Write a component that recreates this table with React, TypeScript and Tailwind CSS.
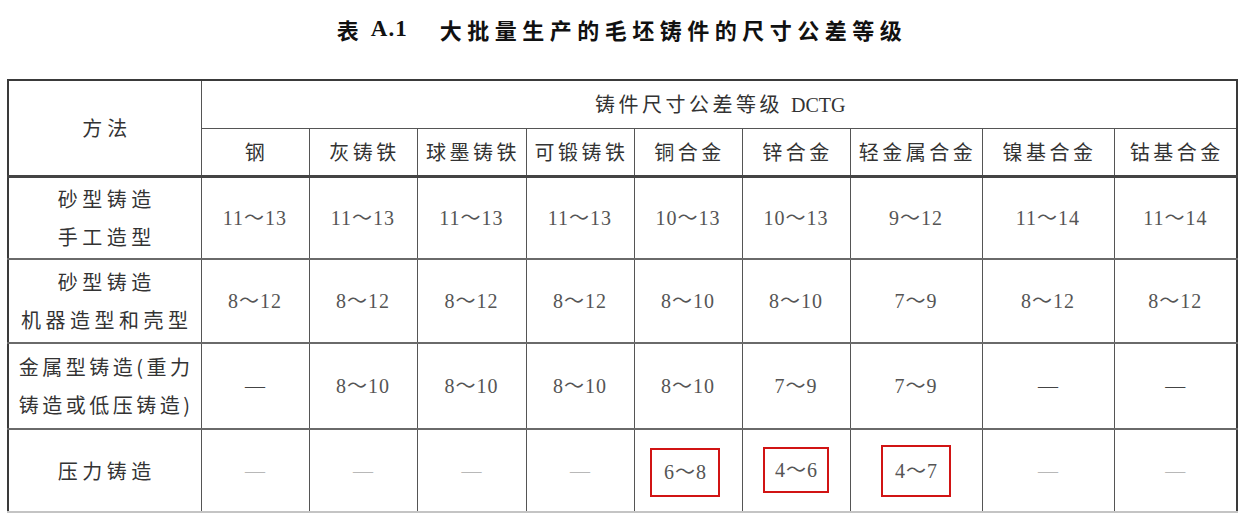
import React from "react";

const cjk = "font-['Noto_Sans_CJK_SC',sans-serif]";
const serif = "font-['Liberation_Serif','Noto_Sans_CJK_SC',serif]";

const materials = ["钢", "灰铸铁", "球墨铸铁", "可锻铸铁", "铜合金", "锌合金", "轻金属合金", "镍基合金", "钴基合金"];

type Row = { label: string[]; h: string; values: string[]; light?: boolean };

const rows: Row[] = [
  { label: ["砂型铸造", "手工造型"], h: "h-[83px]", values: ["11～13", "11～13", "11～13", "11～13", "10～13", "10～13", "9～12", "11～14", "11～14"] },
  { label: ["砂型铸造", "机器造型和壳型"], h: "h-[84px]", values: ["8～12", "8～12", "8～12", "8～12", "8～10", "8～10", "7～9", "8～12", "8～12"] },
  { label: ["金属型铸造(重力", "铸造或低压铸造)"], h: "h-[86px]", values: ["—", "8～10", "8～10", "8～10", "8～10", "7～9", "7～9", "—", "—"] },
  { label: ["压力铸造"], h: "h-[83px]", values: ["—", "—", "—", "—", "6～8", "4～6", "4～7", "—", "—"], light: true },
];

const boxes: Record<string, string> = {
  "6～8": "w-[70px] h-[49px] mt-[3px] -ml-[6px]",
  "4～6": "w-[66px] h-[46px] -mt-[2px]",
  "4～7": "w-[70px] h-[52px] mt-[1px]",
};

export default function App() {
  return (
    <div className={`w-[1244px] h-[526px] bg-white ${cjk}`}>
      <div className="h-[58px] flex items-center justify-center text-[22px] font-bold text-[#111]">
        <span>表</span>
        <span className={`ml-[12px] ${serif} text-[23px] tracking-[1px]`}>A.1</span>
        <span className="ml-[32px] tracking-[5.5px]">大批量生产的毛坯铸件的尺寸公差等级</span>
      </div>
      <table className="ml-[7px] mt-[21px] w-[1229px] table-fixed border-collapse border-x-2 border-t-2 border-b-2 border-x-[#3a3a3a] border-t-[#3a3a3a] border-b-[#c4c4c4] text-[#333] whitespace-nowrap">
        <colgroup>
          <col className="w-[193px]" />
          <col className="w-[108px]" />
          <col className="w-[108px]" />
          <col className="w-[109px]" />
          <col className="w-[108px]" />
          <col className="w-[108px]" />
          <col className="w-[108px]" />
          <col className="w-[132px]" />
          <col className="w-[132px]" />
          <col className="w-[123px]" />
        </colgroup>
        <thead>
          <tr className="h-[48px]">
            <th rowSpan={2} className="border-r border-r-[#555] border-b-[3px] border-b-[#444] p-0 text-[20px] font-normal tracking-[5px] pl-[5px]">
              方法
            </th>
            <th colSpan={9} className="border-b border-b-[#555] p-0 text-[20px] font-normal tracking-[3.5px] pl-[3px]">
              铸件尺寸公差等级 <span className={`${serif} tracking-[0px]`}>DCTG</span>
            </th>
          </tr>
          <tr className="h-[48px]">
            {materials.map((m, i) => (
              <th
                key={m}
                className={`p-0 border-b-[3px] border-b-[#444] text-[20px] font-normal tracking-[3.5px] pl-[3px] ${i < 8 ? "border-r border-r-[#555]" : ""}`}
              >
                {m}
              </th>
            ))}
          </tr>
        </thead>
        <tbody>
          {rows.map((r, ri) => (
            <tr key={ri} className={r.h}>
              <td className={`p-0 text-center border-r border-r-[#555] text-[20px] leading-[38px] ${ri === 2 ? "tracking-[3.5px] pl-[3px]" : "tracking-[4.5px] pl-[4px]"} ${ri < 3 ? "border-b-2 border-b-[#6a6a6a]" : ""}`}>
                {r.label.map((l) => (
                  <div key={l}>{l}</div>
                ))}
              </td>
              {r.values.map((v, vi) => {
                const box = r.light ? boxes[v] : undefined;
                const isDash = v === "—";
                return (
                  <td
                    key={vi}
                    className={`p-0 text-center ${serif} text-[20px] ${vi < 8 ? "border-r border-r-[#555]" : ""} ${ri < 3 ? "border-b-2 border-b-[#6a6a6a]" : ""} ${
                      isDash ? (r.light ? "text-[#b8b8b8]" : "text-[#444]") : "text-[#555] tracking-[1px]"
                    }`}
                  >
                    {box ? (
                      <span className={`inline-flex items-center justify-center border-2 border-[#d11414] pl-[1px] ${box}`}>{v}</span>
                    ) : (
                      v
                    )}
                  </td>
                );
              })}
            </tr>
          ))}
        </tbody>
      </table>
    </div>
  );
}
